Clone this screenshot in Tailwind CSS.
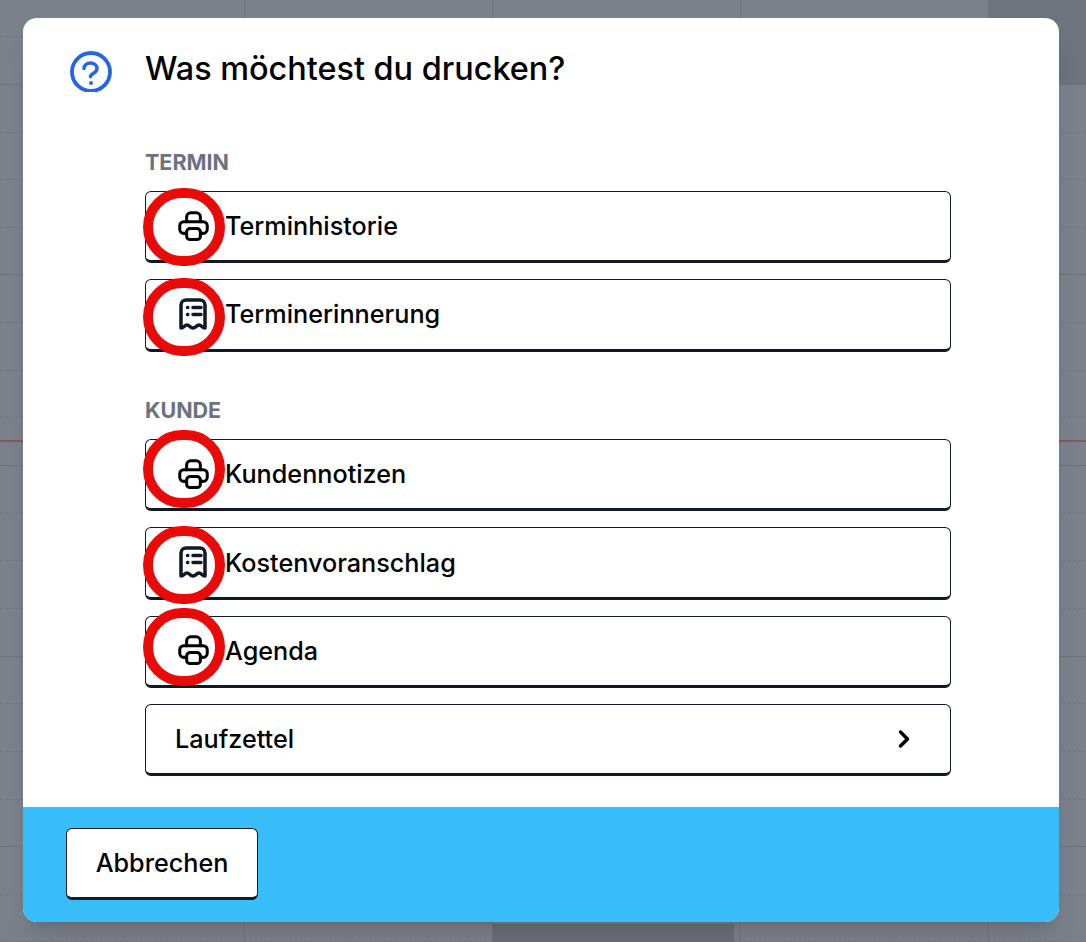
<!DOCTYPE html>
<html lang="de">
<head>
    <meta charset="UTF-8">
    <meta name="viewport" content="width=device-width, initial-scale=1.0">
    <title>Drucken</title>
    <script src="https://cdn.jsdelivr.net/npm/@tailwindcss/browser@4"></script>
</head>
<body class="bg-[#7b818b] font-['Inter',sans-serif] text-black">
    <div class="relative w-[1086px] h-[942px] overflow-hidden">
        <!-- calendar behind the overlay -->
        <div class="absolute inset-0">
            <div id="rows" class="absolute inset-x-0 top-[-10.4px]"></div>
            <div class="absolute inset-0 flex">
                <div class="w-[245px] border-r border-[#6e747d]"></div>
                <div class="w-[248px] border-r border-[#6e747d]"></div>
                <div class="w-[248px] border-r border-[#6e747d]"></div>
                <div class="w-[248px] border-r border-[#6e747d]"></div>
            </div>
            <div class="absolute top-0 right-0 w-[97px] h-[85px] bg-[#6e747e]"></div>
            <div class="absolute bottom-0 left-[493px] w-[241px] h-[18px] bg-[#6a6e78]"></div>
            <div class="absolute inset-x-0 top-[440px] h-[2px] bg-[#7d5a66]"></div>
        </div>

        <!-- dialog -->
        <div class="absolute left-[23px] top-[18px] w-[1036px] h-[904px] rounded-[14px] bg-white shadow-xl overflow-hidden flex flex-col">
            <div class="flex-1 pl-[47px] pr-[108px] pt-[32px]">
                <div class="flex gap-[33px]">
                    <svg class="w-[42px] h-[42px] shrink-0" viewBox="0 0 42 42" fill="none" stroke="#2563eb" stroke-width="3.800" stroke-linecap="round" stroke-linejoin="round">
                        <circle cx="21" cy="22" r="19"/>
                        <path d="M14 18.500c0-3.300 3-5.500 6.500-5.500s6.500 2.200 6.500 5.500c0 2.800-1.800 3.900-3.700 5-1.600.9-2.800 1.600-2.800 3v.3" stroke-width="3.500"/>
                        <circle cx="21" cy="33" r="1" fill="#2563eb" stroke-width="2"/>
                    </svg>
                    <div class="flex-1">
                        <h2 class="pt-[1px] text-[32.4px] leading-[36px] font-medium">Was möchtest du drucken?</h2>

                        <h3 class="mt-[61px] text-[21.500px] leading-[28px] font-bold text-[#6b7280]">TERMIN</h3>
                        <div class="mt-[15px] flex flex-col gap-4">
                            <button class="h-[72.3px] flex items-center gap-[14px] px-[29px] rounded-md border border-b-[3px] border-[#111827] bg-white text-[25.2px] font-medium">
                                <svg class="w-[33px] h-[33px] mx-[1.5px] shrink-0" viewBox="0 0 24 24" fill="none" stroke="black" stroke-width="2.2" stroke-linecap="round" stroke-linejoin="round">
                                    <path d="M7 8.500V5a3 3 0 0 1 3-3h4a3 3 0 0 1 3 3v3.500"/>
                                    <path d="M7 17H5a3 3 0 0 1-3-3v-2.500a3 3 0 0 1 3-3h14a3 3 0 0 1 3 3V14a3 3 0 0 1-3 3h-2"/>
                                    <rect x="7" y="13.500" width="10" height="8" rx="2.500"/>
                                </svg>
                                <span class="pt-[2px]">Terminhistorie</span>
                            </button>
                            <button class="h-[72.3px] flex items-center gap-[14px] px-[29px] rounded-md border border-b-[3px] border-[#111827] bg-white text-[25.2px] font-medium">
                                <svg class="w-[33px] h-[33px] mx-[1.5px] shrink-0" viewBox="0 0 33 33" fill="none" stroke="#111827" stroke-width="3.500" stroke-linecap="round" stroke-linejoin="round">
                                    <path d="M4 30V7a5 5 0 0 1 5-5h14a5 5 0 0 1 5 5v23c-3 0-3.250-3-6-3s-3 3-6 3-3.250-3-6-3-3 3-6 3z"/>
                                    <path d="M16 9.500h8M16 16.500h8M10.500 9.500h.3M10.500 16.500h.3"/>
                                </svg>
                                <span class="pt-[1px]">Terminerinnerung</span>
                            </button>
                        </div>

                        <h3 class="mt-[44.500px] text-[21.500px] leading-[28px] font-bold text-[#6b7280]">KUNDE</h3>
                        <div class="mt-[15px] flex flex-col gap-4">
                            <button class="h-[72.3px] flex items-center gap-[14px] px-[29px] rounded-md border border-b-[3px] border-[#111827] bg-white text-[25.2px] font-medium">
                                <svg class="w-[33px] h-[33px] mx-[1.5px] shrink-0" viewBox="0 0 24 24" fill="none" stroke="black" stroke-width="2.2" stroke-linecap="round" stroke-linejoin="round">
                                    <path d="M7 8.500V5a3 3 0 0 1 3-3h4a3 3 0 0 1 3 3v3.500"/>
                                    <path d="M7 17H5a3 3 0 0 1-3-3v-2.500a3 3 0 0 1 3-3h14a3 3 0 0 1 3 3V14a3 3 0 0 1-3 3h-2"/>
                                    <rect x="7" y="13.500" width="10" height="8" rx="2.500"/>
                                </svg>
                                <span class="pt-[1px]">Kundennotizen</span>
                            </button>
                            <button class="h-[72.3px] flex items-center gap-[14px] px-[29px] rounded-md border border-b-[3px] border-[#111827] bg-white text-[25.2px] font-medium">
                                <svg class="w-[33px] h-[33px] mx-[1.5px] shrink-0" viewBox="0 0 33 33" fill="none" stroke="#111827" stroke-width="3.500" stroke-linecap="round" stroke-linejoin="round">
                                    <path d="M4 30V7a5 5 0 0 1 5-5h14a5 5 0 0 1 5 5v23c-3 0-3.250-3-6-3s-3 3-6 3-3.250-3-6-3-3 3-6 3z"/>
                                    <path d="M16 9.500h8M16 16.500h8M10.500 9.500h.3M10.500 16.500h.3"/>
                                </svg>
                                <span class="pt-[2px]">Kostenvoranschlag</span>
                            </button>
                            <button class="h-[72.3px] flex items-center gap-[14px] px-[29px] rounded-md border border-b-[3px] border-[#111827] bg-white text-[25.2px] font-medium">
                                <svg class="w-[33px] h-[33px] mx-[1.5px] shrink-0" viewBox="0 0 24 24" fill="none" stroke="black" stroke-width="2.2" stroke-linecap="round" stroke-linejoin="round">
                                    <path d="M7 8.500V5a3 3 0 0 1 3-3h4a3 3 0 0 1 3 3v3.500"/>
                                    <path d="M7 17H5a3 3 0 0 1-3-3v-2.500a3 3 0 0 1 3-3h14a3 3 0 0 1 3 3V14a3 3 0 0 1-3 3h-2"/>
                                    <rect x="7" y="13.500" width="10" height="8" rx="2.500"/>
                                </svg>
                                <span class="pt-[2px]">Agenda</span>
                            </button>
                            <button class="h-[72.3px] flex items-center justify-between pl-[29px] pr-[34px] rounded-md border border-b-[3px] border-[#111827] bg-white text-[25.2px] font-medium">
                                <span class="pt-[2px]">Laufzettel</span>
                                <svg class="w-6 h-6 shrink-0" viewBox="0 0 24 24" fill="none" stroke="black" stroke-width="3.500" stroke-linecap="round" stroke-linejoin="round">
                                    <path d="M8.500 5 15.500 12l-7 7"/>
                                </svg>
                            </button>
                        </div>
                    </div>
                </div>
            </div>
            <div class="h-[115px] bg-[#38bdf8] flex items-center pl-[43px] pb-[1px]">
                <button class="w-[192px] h-[71.500px] pt-[2px] rounded-md border border-b-[3px] border-[#111827] bg-white text-[25.2px] font-medium">Abbrechen</button>
            </div>
        </div>

        <!-- red annotation rings -->
        <div class="absolute left-[143px] top-[188px] w-[82px] h-[78px] rounded-full border-[10px] border-[#e90a0a]"></div>
        <div class="absolute left-[143px] top-[278px] w-[82px] h-[78px] rounded-full border-[10px] border-[#e90a0a]"></div>
        <div class="absolute left-[143px] top-[430px] w-[82px] h-[78px] rounded-full border-[10px] border-[#e90a0a]"></div>
        <div class="absolute left-[143px] top-[526px] w-[82px] h-[78px] rounded-full border-[10px] border-[#e90a0a]"></div>
        <div class="absolute left-[143px] top-[608px] w-[82px] h-[78px] rounded-full border-[10px] border-[#e90a0a]"></div>
    </div>

    <script>
        const rows = document.getElementById('rows');
        for (let i = 1; i <= 20; i++) {
            const row = document.createElement('div');
            row.className = i % 4 === 2
                ? 'h-[47.65px] border-b border-[#6e747d]'
                : 'h-[47.65px] border-b border-dashed border-[#70767f]';
            rows.appendChild(row);
        }
    </script>
</body>
</html>
